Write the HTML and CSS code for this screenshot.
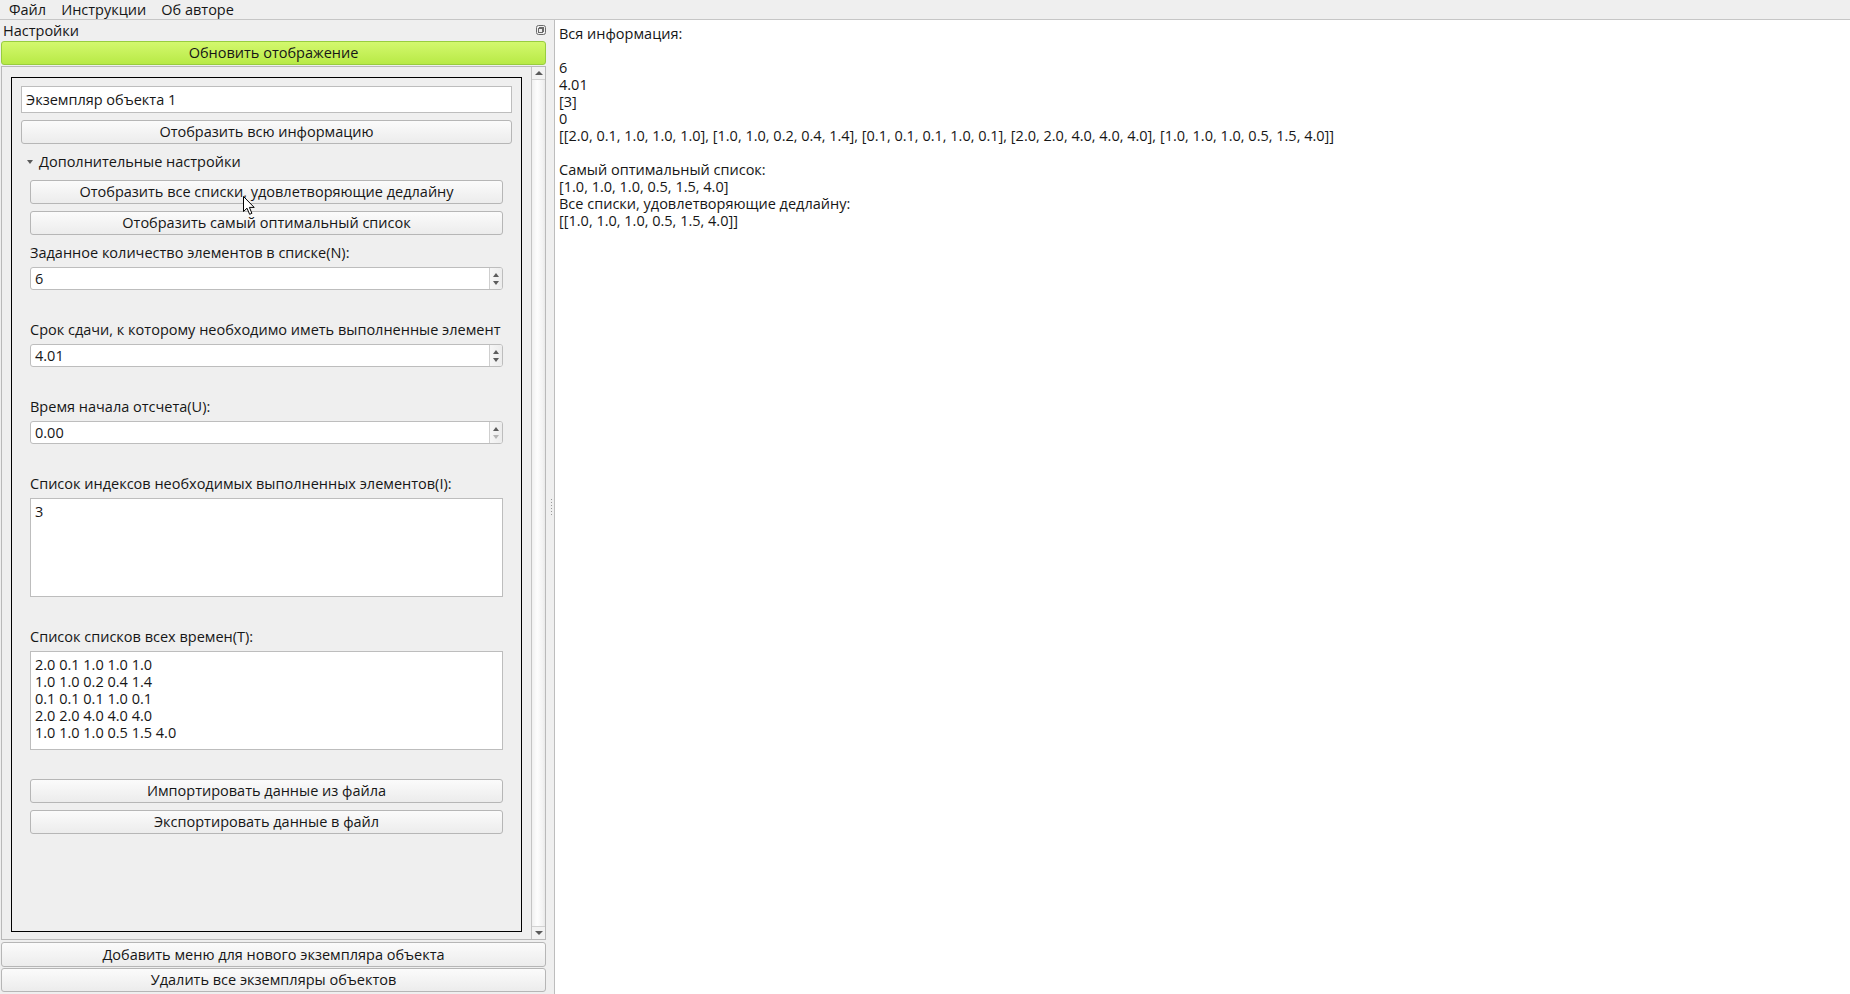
FILE: index.html
```html
<!DOCTYPE html>
<html lang="ru">
<head>
<meta charset="utf-8">
<title>Настройки</title>
<link rel="stylesheet" href="styles.css">
</head>
<body>
<div class="menubar">
  <span class="menu-item">Файл</span>
  <span class="menu-item">Инструкции</span>
  <span class="menu-item">Об авторе</span>
</div>
<div class="main">
  <div class="dock">
    <div class="dock-title">
      <span class="dock-title-text">Настройки</span>
      <svg class="float-icon" width="10" height="10" viewBox="0 0 10 10">
        <rect x="0.5" y="0.5" width="9" height="9" rx="2" fill="none" stroke="#6a6a6a"/>
        <rect x="3.5" y="2.5" width="4" height="4" fill="none" stroke="#6a6a6a"/>
        <rect x="2.5" y="3.5" width="4" height="4" fill="#efefef" stroke="#6a6a6a"/>
      </svg>
    </div>
    <div class="btn btn-green">Обновить отображение</div>
    <div class="scroll-area">
      <div class="viewport">
        <div class="frame">
          <div class="line-edit">Экземпляр объекта 1</div>
          <div class="btn btn-mt">Отобразить всю информацию</div>
          <div class="collapse-header"><span class="arrow"></span>Дополнительные настройки</div>
          <div class="collapse-body">
            <div class="btn">Отобразить все списки, удовлетворяющие дедлайну</div>
            <div class="btn btn-mt">Отобразить самый оптимальный список</div>

            <div class="field field-first">
              <div class="label">Заданное количество элементов в списке(N):</div>
              <div class="spinbox">
                <span class="spin-value">6</span>
                <span class="spin-buttons"><span class="spin-up"></span><span class="spin-down"></span></span>
              </div>
            </div>

            <div class="field">
              <div class="label">Срок сдачи, к которому необходимо иметь выполненные элемент</div>
              <div class="spinbox">
                <span class="spin-value">4.01</span>
                <span class="spin-buttons"><span class="spin-up"></span><span class="spin-down"></span></span>
              </div>
            </div>

            <div class="field">
              <div class="label">Время начала отсчета(U):</div>
              <div class="spinbox">
                <span class="spin-value">0.00</span>
                <span class="spin-buttons"><span class="spin-up"></span><span class="spin-down spin-disabled"></span></span>
              </div>
            </div>

            <div class="field">
              <div class="label">Список индексов необходимых выполненных элементов(I):</div>
              <div class="text-edit">3</div>
            </div>

            <div class="field">
              <div class="label">Список списков всех времен(T):</div>
              <div class="text-edit">2.0 0.1 1.0 1.0 1.0
1.0 1.0 0.2 0.4 1.4
0.1 0.1 0.1 1.0 0.1
2.0 2.0 4.0 4.0 4.0
1.0 1.0 1.0 0.5 1.5 4.0</div>
            </div>

            <div class="btn btn-import">Импортировать данные из файла</div>
            <div class="btn btn-mt">Экспортировать данные в файл</div>
          </div>
        </div>
      </div>
      <div class="scrollbar">
        <div class="sb-btn sb-up"><span class="tri-up"></span></div>
        <div class="sb-handle"></div>
        <div class="sb-btn sb-down"><span class="tri-down"></span></div>
      </div>
    </div>
    <div class="btn btn-bottom btn-add">Добавить меню для нового экземпляра объекта</div>
    <div class="btn btn-bottom btn-del">Удалить все экземпляры объектов</div>
  </div>
  <div class="splitter"><span class="grip"></span></div>
  <div class="pane">Вся информация:

6
4.01
[3]
0
[[2.0, 0.1, 1.0, 1.0, 1.0], [1.0, 1.0, 0.2, 0.4, 1.4], [0.1, 0.1, 0.1, 1.0, 0.1], [2.0, 2.0, 4.0, 4.0, 4.0], [1.0, 1.0, 1.0, 0.5, 1.5, 4.0]]

Самый оптимальный список:
[1.0, 1.0, 1.0, 0.5, 1.5, 4.0]
Все списки, удовлетворяющие дедлайну:
[[1.0, 1.0, 1.0, 0.5, 1.5, 4.0]]</div>
</div>
<svg class="cursor" width="13" height="20" viewBox="0 0 13 20">
  <path d="M0.5 0.5 L0.5 15.5 L4 12.2 L6.6 18.3 L8.9 17.3 L6.4 11.4 L11.2 11.4 Z" fill="#ffffff" stroke="#000000" stroke-width="1" stroke-linejoin="round"/>
</svg>
</body>
</html>
```

FILE: styles.css
```css
* { box-sizing: border-box; }
html, body { margin: 0; padding: 0; }
body {
  width: 1850px;
  height: 994px;
  overflow: hidden;
  background: #efefef;
  font-family: "Open Sans", "Liberation Sans", sans-serif;
  font-size: 14.5px;
  color: #161616;
  position: relative;
}

.menubar {
  height: 20px;
  border-bottom: 1px solid #c6c6c6;
  display: flex;
  align-items: center;
  gap: 15px;
  padding-left: 9px;
  line-height: 19px;
}

.main {
  display: flex;
  height: 974px;
}

.dock {
  width: 546px;
  padding-left: 1px;
  display: flex;
  flex-direction: column;
  flex-shrink: 0;
  min-width: 0;
}

.dock-title {
  height: 21px;
  display: flex;
  align-items: center;
  justify-content: space-between;
  padding-left: 2px;
  line-height: 21px;
}

.float-icon { display: block; margin-top: -2px; }

.btn {
  height: 24px;
  line-height: 22px;
  text-align: center;
  border: 1px solid #b6b6b6;
  border-radius: 3px;
  background: linear-gradient(#fbfbfb, #ececec);
  white-space: nowrap;
  overflow: hidden;
  flex-shrink: 0;
}

.btn-mt { margin-top: 7px; }

.btn-green {
  background: linear-gradient(#d3f86e, #b8ea46);
  border-color: #98cd3f;
}

.scroll-area {
  margin-top: 1px;
  height: 874px;
  border: 1px solid #b9b9b9;
  display: flex;
  flex-shrink: 0;
  min-width: 0;
}

.viewport {
  flex: 1;
  min-width: 0;
  padding: 10px 9px 7px 9px;
  display: flex;
}

.frame {
  flex: 1;
  min-width: 0;
  border: 1px solid #000;
  padding: 8px 9px 0 9px;
}

.line-edit {
  height: 27px;
  line-height: 25px;
  border: 1px solid #bdbdbd;
  background: #fff;
  padding-left: 4px;
}

.collapse-header {
  margin-top: 7px;
  height: 22px;
  line-height: 22px;
  display: flex;
  align-items: center;
  padding-left: 6px;
}

.arrow {
  width: 0;
  height: 0;
  border-left: 3.5px solid transparent;
  border-right: 3.5px solid transparent;
  border-top: 4px solid #5a5a5a;
  margin-right: 6px;
}

.collapse-body {
  margin-top: 7px;
  padding: 0 9px;
}

.field { margin-top: 31px; }
.field-first { margin-top: 9px; }

.label {
  height: 17px;
  line-height: 17px;
  white-space: nowrap;
  margin-bottom: 6px;
}

.spinbox {
  height: 23px;
  border: 1px solid #bdbdbd;
  border-radius: 3px;
  background: #fff;
  display: flex;
}

.spin-value {
  flex: 1;
  line-height: 21px;
  padding-left: 4px;
}

.spin-buttons {
  width: 13px;
  border-left: 1px solid #cfcfcf;
  display: flex;
  flex-direction: column;
  align-items: center;
  justify-content: center;
  gap: 4px;
  background: linear-gradient(90deg, #f6f6f6, #ececec);
  border-radius: 0 2px 2px 0;
}

.spin-up {
  width: 0; height: 0;
  border-left: 3px solid transparent;
  border-right: 3px solid transparent;
  border-bottom: 4px solid #5c5c5c;
}
.spin-down {
  width: 0; height: 0;
  border-left: 3px solid transparent;
  border-right: 3px solid transparent;
  border-top: 4px solid #5c5c5c;
}
.spin-disabled { border-top-color: #b5b5b5; }

.text-edit {
  height: 99px;
  border: 1px solid #bdbdbd;
  background: #fff;
  padding: 4px 4px;
  line-height: 17px;
  white-space: pre;
  overflow: hidden;
}

.btn-import { margin-top: 29px; }

.scrollbar {
  width: 14px;
  flex-shrink: 0;
  border-left: 1px solid #c4c4c4;
  display: flex;
  flex-direction: column;
}

.sb-btn {
  height: 13px;
  display: flex;
  align-items: center;
  justify-content: center;
  background: #f2f2f2;
}
.sb-up { border-bottom: 1px solid #d2d2d2; }
.sb-down { border-top: 1px solid #d2d2d2; }

.tri-up {
  width: 0; height: 0;
  border-left: 4px solid transparent;
  border-right: 4px solid transparent;
  border-bottom: 4px solid #5a5a5a;
}
.tri-down {
  width: 0; height: 0;
  border-left: 4px solid transparent;
  border-right: 4px solid transparent;
  border-top: 4px solid #5a5a5a;
}

.sb-handle {
  flex: 1;
  background: linear-gradient(90deg, #f0f0f0, #fdfdfd 40%, #f3f3f3 80%, #e9e9e9);
}

.btn-bottom { height: 25px; line-height: 23px; }
.btn-add { margin-top: 2px; }
.btn-del { margin-top: 1px; height: 24px; line-height: 22px; }

.splitter {
  width: 8px;
  flex-shrink: 0;
  display: flex;
  align-items: center;
  justify-content: center;
}

.grip {
  width: 1px;
  height: 17px;
  background: repeating-linear-gradient(#9a9a9a 0 1px, transparent 1px 3px);
  margin-left: 2px;
}

.pane {
  flex: 1;
  background: #fff;
  border-left: 1px solid #bdbdbd;
  padding: 5px 4px;
  line-height: 17px;
  white-space: pre;
  overflow: hidden;
}

.cursor {
  position: absolute;
  left: 243px;
  top: 196px;
}
```
